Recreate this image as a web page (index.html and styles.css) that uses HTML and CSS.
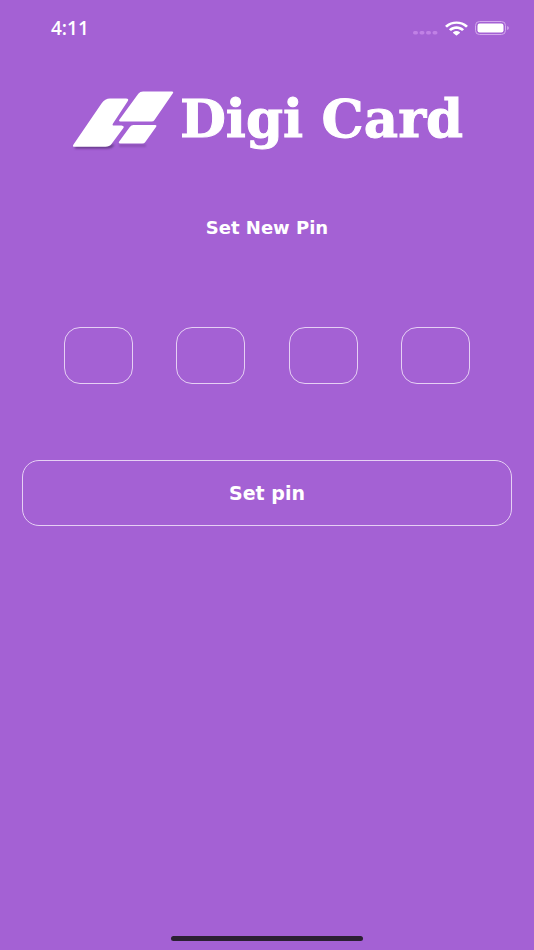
FILE: index.html
```html
<!DOCTYPE html>
<html lang="en">
<head>
<meta charset="utf-8">
<meta name="viewport" content="width=device-width, initial-scale=1">
<title>Digi Card</title>
<link rel="stylesheet" href="styles.css">
</head>
<body>
<header class="status">
  <time class="clock">4:11</time>
  <div class="indicators">
    <svg width="25" height="5" viewBox="0 0 25 5" fill="#c081e5" aria-hidden="true"><rect x="0" y="1" width="5" height="3.500" rx="1.700"/><rect x="6.500" y="1" width="5" height="3.500" rx="1.700"/><rect x="13" y="1" width="5" height="3.500" rx="1.700"/><rect x="19.500" y="1" width="5" height="3.500" rx="1.700"/></svg>
    <svg width="23" height="15" viewBox="0 0 22 15" preserveAspectRatio="none" fill="#fff" aria-hidden="true"><path d="M.4 4.4C6.1-.9 15.9-.9 21.6 4.4q.4.4 0 .8l-1.1 1q-.4.4-.8 0C14.700 1.700 7.300 1.700 2.300 6.200q-.4.400-.8 0l-1.100-1q-.4-.4 0-.8Z"/><path d="M4.100 7.900c3.800-3.500 10-3.500 13.800 0q.4.400 0 .8l-1.200 1q-.4.300-.8 0c-2.800-2.400-7-2.400-9.800 0q-.4.300-.8 0l-1.200-1q-.4-.4 0-.8Z"/><path d="M7.800 11.200c1.800-1.600 4.600-1.600 6.400 0q.4.400 0 .8l-2.700 2.300q-.5.400-1 0L7.800 12q-.4-.4 0-.8Z"/></svg>
    <svg width="34" height="14" viewBox="0 0 34 14" aria-hidden="true"><rect x=".5" y=".5" width="30" height="13" rx="4" fill="none" stroke="#d3a9ed"/><rect x="2.500" y="2.500" width="26" height="9" rx="2.200" fill="#fff"/><path d="M32.200 5v4q1.600-.6 1.600-2t-1.600-2Z" fill="#d3a9ed"/></svg>
  </div>
</header>
<main>
  <h1 class="brand">
    <svg class="mark" width="104" height="64" viewBox="0 0 104 64" aria-hidden="true">
      <defs><filter id="soft" x="-10%" y="-100%" width="120%" height="300%"><feGaussianBlur stdDeviation="1"/></filter></defs>
      <path d="M4 60h33q4 0 6-3l-38 1Z" fill="#653a87" stroke="#653a87" filter="url(#soft)"/>
      <rect x="48" y="56" width="27" height="3" fill="#8c51b7" filter="url(#soft)"/>
      <path d="M39 10.500h16q3.500 0 1.500 3L42 35.500q-1 1.500 0 2h8.500q3.500.5 1.500 3L40.500 56q-2 2.800-6 2.800H3.500q-2.500 0-1-2.300L30.500 15.500q3.500-5 8.500-5Z" fill="#fff"/>
      <path d="M72 3.400h29q2 .1.700 2.200L83.500 32q-1 1.500-3 1.500H49.300q-2-.1-.8-1.900L67.300 5.700q1.800-2.300 4.700-2.300Z" fill="#fff"/>
      <path d="M62.500 37h21.700q2 .2.800 2L74.300 54q-1 1.500-3 1.500H49q-2-.2-.8-1.900L58.800 39q1.500-2 3.700-2Z" fill="#fff"/>
    </svg>
    <span class="name">Digi Card</span>
  </h1>
  <form class="pin-form">
    <fieldset class="pins">
      <legend>Set New Pin</legend>
      <div class="digits">
        <input type="password" inputmode="numeric" maxlength="1" aria-label="Pin digit 1">
        <input type="password" inputmode="numeric" maxlength="1" aria-label="Pin digit 2">
        <input type="password" inputmode="numeric" maxlength="1" aria-label="Pin digit 3">
        <input type="password" inputmode="numeric" maxlength="1" aria-label="Pin digit 4">
      </div>
    </fieldset>
    <button class="submit" type="button">Set pin</button>
  </form>
</main>
<footer class="home"><div class="home-bar"></div></footer>
</body>
</html>
```
FILE: styles.css
```css
* { box-sizing: border-box; }
body {
  margin: 0;
  min-height: 100vh;
  display: flex;
  flex-direction: column;
  background: #a461d4;
  color: #fff;
  font-family: "DejaVu Sans", sans-serif;
}
.status {
  display: flex;
  justify-content: space-between;
  align-items: center;
  height: 56px;
  padding: 0 25px 0 51px;
}
.clock { font: 600 19px/24px "Open Sans", sans-serif; }
.indicators { display: flex; align-items: center; gap: 7px; }
.indicators svg:first-child { margin-top: 8px; }
main { flex: 1; }
.brand {
  display: flex;
  justify-content: center;
  align-items: center;
  gap: 5px;
  margin: 32px 0 0;
  font: 700 53px/60px "DejaVu Serif", serif;
  white-space: nowrap;
}
.name { padding-bottom: 4px; -webkit-text-stroke: 1px #fff; }
.mark { flex: none; }
.pin-form { padding: 0 22px; }
.pins { margin: 0; padding: 0 42px; border: 0; }
legend {
  width: 100%;
  padding: 64px 0 87px;
  text-align: center;
  font-weight: 700;
  font-size: 18px;
  line-height: 24px;
}
.digits { display: flex; justify-content: space-between; }
.digits input {
  width: 17%;
  height: 57px;
  padding: 0;
  border: 1px solid #e6d0f4;
  border-radius: 16px;
  background: transparent;
  color: #fff;
  font-size: 24px;
  text-align: center;
}
.submit {
  display: block;
  width: 100%;
  height: 66px;
  margin-top: 76px;
  padding: 0;
  border: 1px solid #e6d0f4;
  border-radius: 17px;
  background: transparent;
  color: #fff;
  font: 700 19px/24px "DejaVu Sans", sans-serif;
}
.home { display: flex; justify-content: center; padding-bottom: 9px; }
.home-bar { width: 36%; height: 5px; border-radius: 3px; background: #2b2032; }
```
